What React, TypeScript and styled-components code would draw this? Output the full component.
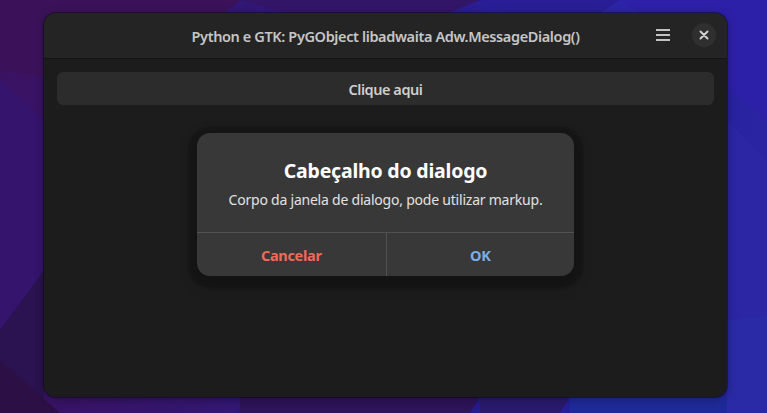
import React from "react";
import styled, { createGlobalStyle } from "styled-components";

const Global = createGlobalStyle`
  html, body { margin: 0; padding: 0; }
  body { width: 767px; height: 413px; overflow: hidden; font-family: "Noto Sans", "DejaVu Sans", sans-serif; }
  #root { width: 767px; height: 413px; }
`;

const Desktop = styled.div`
  position: relative;
  width: 767px;
  height: 413px;
  box-sizing: border-box;
  padding: 13px 40px 16px 44px;
  background:
    linear-gradient(135deg, transparent 0 55%, rgba(20, 20, 120, 0.25) 55% 100%),
    linear-gradient(90deg, #3a1262 0%, #34166e 25%, #2a1a8c 55%, #2b24a6 75%, #3128b0 100%);
  overflow: hidden;
`;

const Wallpaper = styled.svg`
  position: absolute;
  inset: 0;
  width: 767px;
  height: 413px;
`;

const Window = styled.div`
  position: relative;
  width: 683px;
  height: 384px;
  border-radius: 12px;
  background: #1c1c1c;
  box-shadow: 0 0 0 1px rgba(0, 0, 0, 0.35), 0 2px 10px rgba(0, 0, 0, 0.35);
  display: flex;
  flex-direction: column;
  overflow: hidden;
`;

const HeaderBar = styled.div`
  height: 45px;
  flex: 0 0 auto;
  background: #242424;
  border-bottom: 1px solid #141414;
  display: grid;
  grid-template-columns: 1fr auto 1fr;
  align-items: center;
  padding: 0 11px;
`;

const Title = styled.div`
  grid-column: 2;
  color: #c6c6c6;
  font-size: 14.5px;
  font-weight: 600;
  letter-spacing: -0.38px;
  white-space: nowrap;
  margin-top: 0px;
`;

const HeaderActions = styled.div`
  grid-column: 3;
  justify-self: end;
  display: flex;
  align-items: center;
  gap: 17px;
  margin-top: -1px;
`;

const IconButton = styled.button<{ $round?: boolean }>`
  border: none;
  padding: 0;
  width: 24px;
  height: 24px;
  border-radius: 50%;
  background: ${(p) => (p.$round ? "#2f2f2f" : "transparent")};
  display: flex;
  align-items: center;
  justify-content: center;
  color: #c2c2c2;
`;

const Content = styled.div`
  flex: 1;
  padding: 13px 13px;
  display: flex;
  flex-direction: column;
`;

const WideButton = styled.button`
  height: 33px;
  border: none;
  border-radius: 6px;
  background: #2c2c2c;
  color: #cfcfcf;
  font-family: "Noto Sans", sans-serif;
  font-size: 14.5px;
  font-weight: 600;
  letter-spacing: -0.45px;
`;

const Dialog = styled.div`
  position: absolute;
  left: 153px;
  top: 120px;
  width: 377px;
  height: 143px;
  border-radius: 13px;
  background: #383838;
  box-shadow: 0 3px 2px 9px rgba(0, 0, 0, 0.18), 0 6px 14px 6px rgba(0, 0, 0, 0.15);
  display: flex;
  flex-direction: column;
  overflow: hidden;
`;

const DialogBody = styled.div`
  height: 100px;
  box-sizing: border-box;
  border-bottom: 1px solid #525252;
  display: flex;
  flex-direction: column;
  align-items: center;
  padding-top: 24px;
`;

const Heading = styled.div`
  color: #ffffff;
  font-size: 19.5px;
  font-weight: 700;
  letter-spacing: -0.2px;
  line-height: 28px;
`;

const BodyText = styled.div`
  color: #e2e2e2;
  font-size: 14px;
  letter-spacing: -0.22px;
  line-height: 20px;
  margin-top: 5px;
`;

const ResponseRow = styled.div`
  flex: 1;
  display: grid;
  grid-template-columns: 1fr 1fr;
`;

const Response = styled.button<{ $tone: "destructive" | "suggested" }>`
  border: none;
  background: transparent;
  font-family: "Noto Sans", sans-serif;
  font-size: 14.5px;
  font-weight: 700;
  letter-spacing: -0.3px;
  color: ${(p) => (p.$tone === "destructive" ? "#ee6b5c" : "#7aaeea")};
  & + & {
    border-left: 1px solid #525252;
  }
`;

export default function App() {
  return (
    <>
      <Global />
      <Desktop>
        <Wallpaper viewBox="0 0 767 413" aria-hidden>
          <polygon points="0,0 240,0 130,90 0,70" fill="#3b1259" />
          <polygon points="240,0 480,0 380,40" fill="#331568" />
          <polygon points="480,0 620,0 560,40" fill="#2a1e96" />
          <polygon points="620,0 767,0 767,120" fill="#2d20a8" />
          <polygon points="0,80 44,120 44,380 0,330" fill="#35146e" />
          <polygon points="0,330 44,270 44,413 0,413" fill="#2a1350" />
          <polygon points="0,360 60,413 0,413" fill="#2c1045" />
          <polygon points="727,120 767,160 767,330 727,320" fill="#2c25a4" />
          <polygon points="727,320 767,315 767,413 727,413" fill="#2a2aa6" />
          <polygon points="240,397 480,397 470,413 240,413" fill="#2e1459" />
          <polygon points="480,397 570,397 560,413 480,413" fill="#2a1a6e" />
          <polygon points="570,397 727,397 727,413 570,413" fill="#1f2a9a" />
        </Wallpaper>
        <Window>
          <HeaderBar>
            <Title>Python e GTK: PyGObject libadwaita Adw.MessageDialog()</Title>
            <HeaderActions>
              <IconButton aria-label="Menu">
                <svg width="16" height="16" viewBox="0 0 16 16">
                  <rect x="1" y="2" width="14" height="2" fill="#c2c2c2" />
                  <rect x="1" y="7" width="14" height="2" fill="#c2c2c2" />
                  <rect x="1" y="12" width="14" height="2" fill="#c2c2c2" />
                </svg>
              </IconButton>
              <IconButton $round aria-label="Fechar">
                <svg width="10" height="10" viewBox="0 0 10 10">
                  <path d="M1.5 1.5 L8.5 8.5 M8.5 1.5 L1.5 8.5" stroke="#d0d0d0" strokeWidth="2" strokeLinecap="round" />
                </svg>
              </IconButton>
            </HeaderActions>
          </HeaderBar>
          <Content>
            <WideButton>Clique aqui</WideButton>
          </Content>
          <Dialog>
            <DialogBody>
              <Heading>Cabeçalho do dialogo</Heading>
              <BodyText>Corpo da janela de dialogo, pode utilizar markup.</BodyText>
            </DialogBody>
            <ResponseRow>
              <Response $tone="destructive">Cancelar</Response>
              <Response $tone="suggested">OK</Response>
            </ResponseRow>
          </Dialog>
        </Window>
      </Desktop>
    </>
  );
}
